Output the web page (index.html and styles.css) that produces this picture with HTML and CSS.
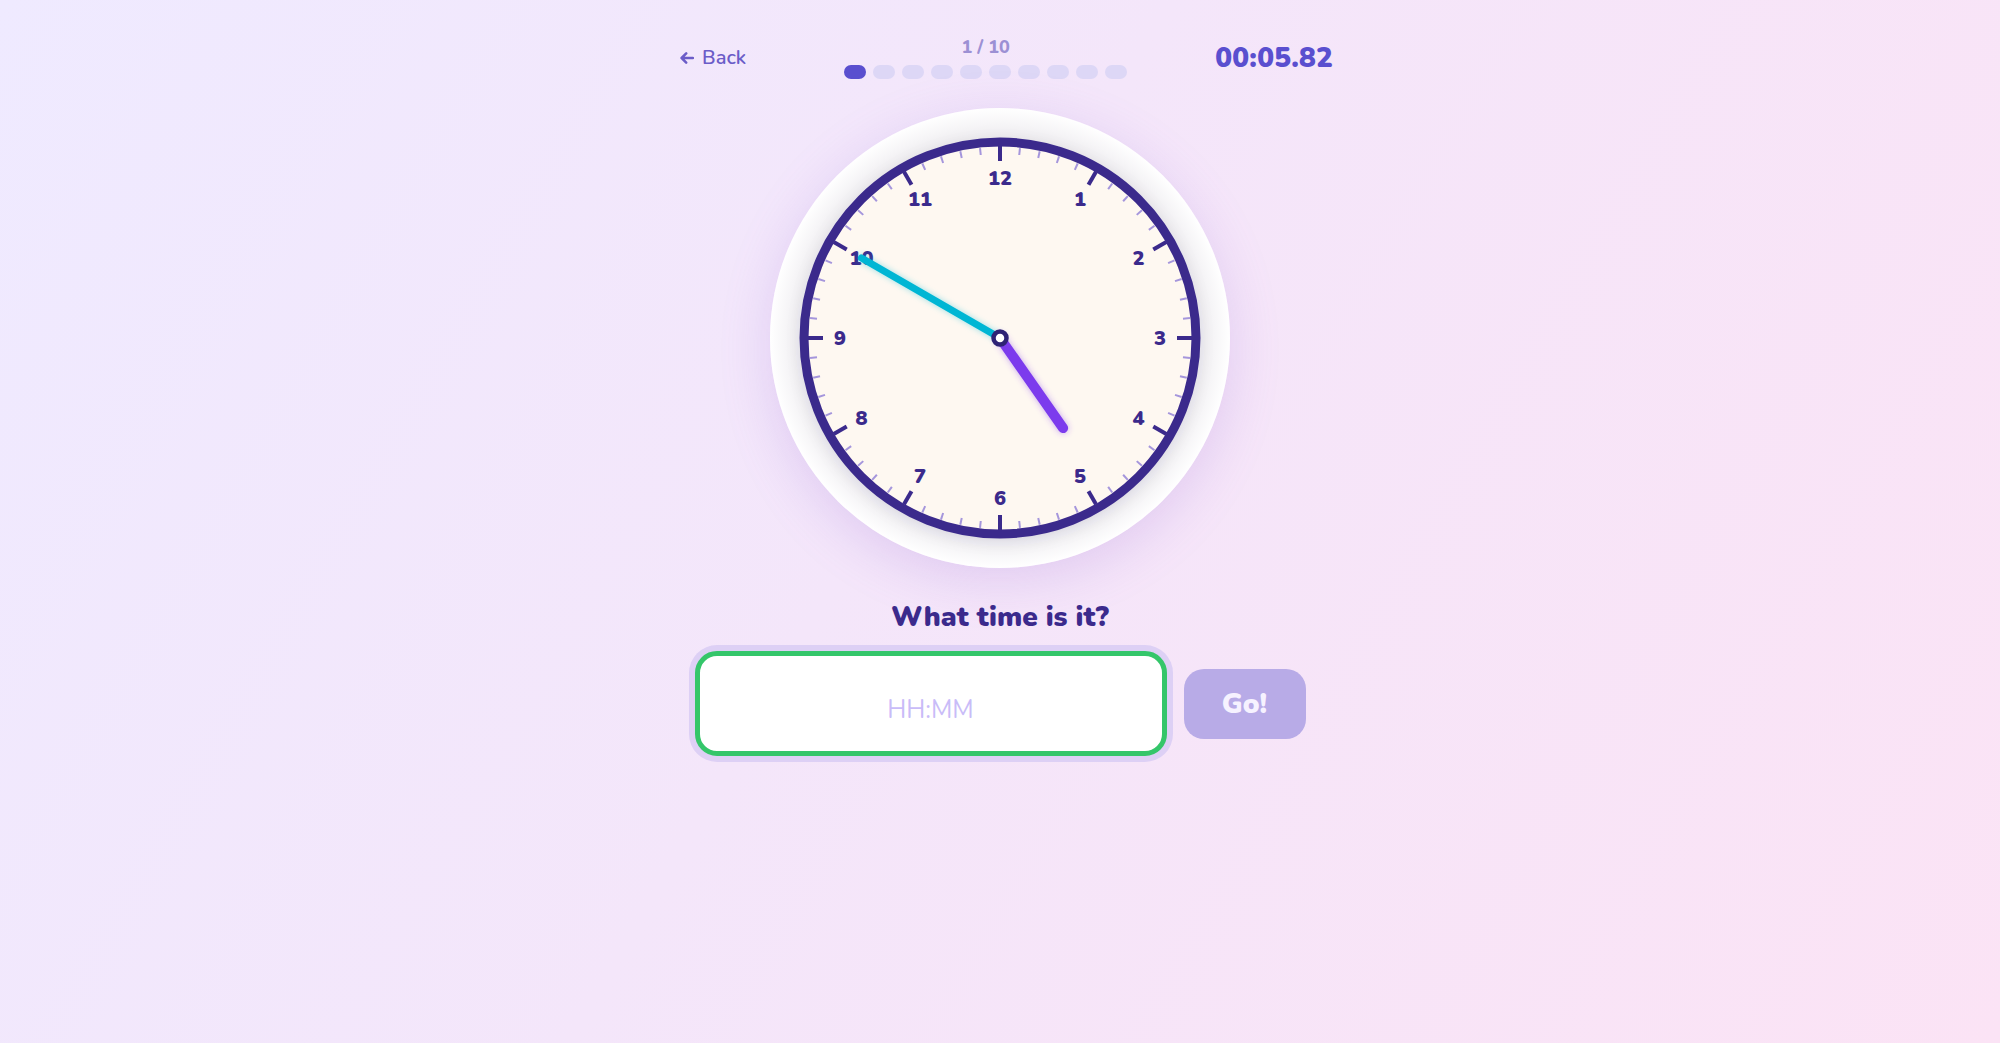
FILE: index.html
```html
<!DOCTYPE html>
<html lang="en">
<head>
<meta charset="utf-8">
<title>What time is it?</title>
<link rel="stylesheet" href="styles.css">
</head>
<body>
<main class="app">
  <header class="topbar">
    <a class="back" href="#"><svg class="back-arrow" width="14" height="12" viewBox="0 0 14 12"><path d="M13 6H1.6M6.2 1.4L1.6 6l4.6 4.6"/></svg>Back</a>
    <div class="progress">
      <div class="progress-label">1 / 10</div>
      <div class="dots">
        <span class="dot active"></span><span class="dot"></span><span class="dot"></span><span class="dot"></span><span class="dot"></span><span class="dot"></span><span class="dot"></span><span class="dot"></span><span class="dot"></span><span class="dot"></span>
      </div>
    </div>
    <div class="timer">00:05.82</div>
  </header>

  <section class="clock-wrap">
    <div class="clock-disc">
      <svg class="clock" width="460" height="460" viewBox="-230 -230 460 460">
        <defs>
          <filter id="faceShadow" x="-30%" y="-30%" width="160%" height="160%">
            <feDropShadow dx="0" dy="4" stdDeviation="9" flood-color="#2a1f55" flood-opacity="0.12"/>
          </filter>
          <filter id="glowCyan" x="-30%" y="-30%" width="160%" height="160%">
            <feDropShadow dx="0" dy="0" stdDeviation="3" flood-color="#06b6d4" flood-opacity="0.4"/>
          </filter>
          <filter id="glowPurple" x="-30%" y="-30%" width="160%" height="160%">
            <feDropShadow dx="0" dy="0" stdDeviation="3" flood-color="#7c3aed" flood-opacity="0.45"/>
          </filter>
        </defs>
        <circle class="face" r="196" filter="url(#faceShadow)"/>
        <g class="minor">
          <line y1="-191" y2="-184" transform="rotate(6)"/><line y1="-191" y2="-184" transform="rotate(12)"/><line y1="-191" y2="-184" transform="rotate(18)"/><line y1="-191" y2="-184" transform="rotate(24)"/>
          <line y1="-191" y2="-184" transform="rotate(36)"/><line y1="-191" y2="-184" transform="rotate(42)"/><line y1="-191" y2="-184" transform="rotate(48)"/><line y1="-191" y2="-184" transform="rotate(54)"/>
          <line y1="-191" y2="-184" transform="rotate(66)"/><line y1="-191" y2="-184" transform="rotate(72)"/><line y1="-191" y2="-184" transform="rotate(78)"/><line y1="-191" y2="-184" transform="rotate(84)"/>
          <line y1="-191" y2="-184" transform="rotate(96)"/><line y1="-191" y2="-184" transform="rotate(102)"/><line y1="-191" y2="-184" transform="rotate(108)"/><line y1="-191" y2="-184" transform="rotate(114)"/>
          <line y1="-191" y2="-184" transform="rotate(126)"/><line y1="-191" y2="-184" transform="rotate(132)"/><line y1="-191" y2="-184" transform="rotate(138)"/><line y1="-191" y2="-184" transform="rotate(144)"/>
          <line y1="-191" y2="-184" transform="rotate(156)"/><line y1="-191" y2="-184" transform="rotate(162)"/><line y1="-191" y2="-184" transform="rotate(168)"/><line y1="-191" y2="-184" transform="rotate(174)"/>
          <line y1="-191" y2="-184" transform="rotate(186)"/><line y1="-191" y2="-184" transform="rotate(192)"/><line y1="-191" y2="-184" transform="rotate(198)"/><line y1="-191" y2="-184" transform="rotate(204)"/>
          <line y1="-191" y2="-184" transform="rotate(216)"/><line y1="-191" y2="-184" transform="rotate(222)"/><line y1="-191" y2="-184" transform="rotate(228)"/><line y1="-191" y2="-184" transform="rotate(234)"/>
          <line y1="-191" y2="-184" transform="rotate(246)"/><line y1="-191" y2="-184" transform="rotate(252)"/><line y1="-191" y2="-184" transform="rotate(258)"/><line y1="-191" y2="-184" transform="rotate(264)"/>
          <line y1="-191" y2="-184" transform="rotate(276)"/><line y1="-191" y2="-184" transform="rotate(282)"/><line y1="-191" y2="-184" transform="rotate(288)"/><line y1="-191" y2="-184" transform="rotate(294)"/>
          <line y1="-191" y2="-184" transform="rotate(306)"/><line y1="-191" y2="-184" transform="rotate(312)"/><line y1="-191" y2="-184" transform="rotate(318)"/><line y1="-191" y2="-184" transform="rotate(324)"/>
          <line y1="-191" y2="-184" transform="rotate(336)"/><line y1="-191" y2="-184" transform="rotate(342)"/><line y1="-191" y2="-184" transform="rotate(348)"/><line y1="-191" y2="-184" transform="rotate(354)"/>
        </g>
        <g class="major">
          <line y1="-192" y2="-177"/><line y1="-192" y2="-177" transform="rotate(30)"/><line y1="-192" y2="-177" transform="rotate(60)"/><line y1="-192" y2="-177" transform="rotate(90)"/>
          <line y1="-192" y2="-177" transform="rotate(120)"/><line y1="-192" y2="-177" transform="rotate(150)"/><line y1="-192" y2="-177" transform="rotate(180)"/><line y1="-192" y2="-177" transform="rotate(210)"/>
          <line y1="-192" y2="-177" transform="rotate(240)"/><line y1="-192" y2="-177" transform="rotate(270)"/><line y1="-192" y2="-177" transform="rotate(300)"/><line y1="-192" y2="-177" transform="rotate(330)"/>
        </g>
        <circle class="rim" r="196"/>
        <g class="numbers">
          <text x="0" y="-160">12</text>
          <text x="80" y="-138.6">1</text>
          <text x="138.6" y="-80">2</text>
          <text x="160" y="0">3</text>
          <text x="138.6" y="80">4</text>
          <text x="80" y="138.6">5</text>
          <text x="0" y="160">6</text>
          <text x="-80" y="138.6">7</text>
          <text x="-138.6" y="80">8</text>
          <text x="-160" y="0">9</text>
          <text x="-138.6" y="-80">10</text>
          <text x="-80" y="-138.6">11</text>
        </g>
        <line class="hand-hour" x1="0" y1="0" x2="63.1" y2="90.1" filter="url(#glowPurple)"/>
        <line class="hand-minute" x1="0" y1="0" x2="-138.6" y2="-80" filter="url(#glowCyan)"/>
        <circle class="pivot" r="6.5"/>
      </svg>
    </div>
  </section>

  <h1 class="question">What time is it?</h1>

  <form class="answer" onsubmit="return false">
    <input class="answer-input" type="text" placeholder="HH:MM">
    <button class="go" type="submit">Go!</button>
  </form>
</main>
</body>
</html>
```

FILE: styles.css
```css
* { box-sizing: border-box; }

html, body {
  margin: 0;
  min-height: 100%;
}

body {
  min-height: 100vh;
  font-family: "Nunito", "Lato", "Noto Sans", sans-serif;
  background: linear-gradient(120deg, #efeaff 0%, #f4e6fa 45%, #fbe3f5 100%);
  color: #3b2a8c;
}

.app {
  width: 680px;
  margin: 0 auto;
  padding-top: 36px;
  display: flex;
  flex-direction: column;
  align-items: center;
}

.topbar {
  width: 100%;
  padding: 0 7px 0 20px;
  display: flex;
  align-items: center;
  justify-content: space-between;
}

.back {
  color: #6b5cc8;
  text-decoration: none;
  font-size: 20px;
  font-weight: 600;
  display: flex;
  align-items: center;
  gap: 8px;
}

.back-arrow {
  display: block;
  fill: none;
  stroke: #6b5cc8;
  stroke-width: 2.5;
  stroke-linecap: round;
  stroke-linejoin: round;
}

.progress {
  display: flex;
  flex-direction: column;
  align-items: center;
  gap: 7px;
  margin-left: 10px;
}

.progress-label {
  font-size: 18px;
  line-height: 22px;
  font-weight: 800;
  color: #9c90d4;
}

.dots {
  display: flex;
  gap: 7px;
}

.dot {
  width: 22px;
  height: 14px;
  border-radius: 7px;
  background: #ddd7f6;
}

.dot.active {
  background: #5a4fcf;
}

.timer {
  font-size: 28px;
  font-weight: 900;
  color: #5a4fcf;
  letter-spacing: 0.2px;
}

.clock-wrap {
  margin-top: 29px;
}

.clock-disc {
  width: 460px;
  height: 460px;
  border-radius: 50%;
  background: radial-gradient(circle closest-side, #ebe9ed 0%, #ebe9ed 86%, #f6f5f7 93%, #ffffff 100%);
  box-shadow: 0 12px 50px rgba(150, 105, 215, 0.22);
}

.clock {
  display: block;
}

.face {
  fill: #fef8f1;
}

.rim {
  fill: none;
  stroke: #3b2a8c;
  stroke-width: 9;
}

.minor line {
  stroke: #a596dc;
  stroke-width: 2;
}

.major line {
  stroke: #3b2a8c;
  stroke-width: 4;
}

.numbers text {
  fill: #3b2a8c;
  font-family: "Nunito", "Lato", "Noto Sans", sans-serif;
  font-size: 20px;
  font-weight: 900;
  text-anchor: middle;
  dominant-baseline: central;
}

.hand-minute {
  stroke: #06b6d4;
  stroke-width: 7;
  stroke-linecap: round;
}

.hand-hour {
  stroke: #7c3aed;
  stroke-width: 10;
  stroke-linecap: round;
}

.pivot {
  fill: #ffffff;
  stroke: #2e2275;
  stroke-width: 4.5;
}

.question {
  margin: 32px 0 0;
  font-size: 28px;
  line-height: 34px;
  font-weight: 900;
  color: #3b2a8c;
}

.answer {
  margin-top: 17px;
  display: flex;
  align-items: center;
  gap: 17px;
}

.answer-input {
  width: 472px;
  height: 105px;
  border: 5px solid #34c66a;
  border-radius: 22px;
  box-shadow: 0 0 0 6px #ddd0f5;
  background: #ffffff;
  outline: none;
  text-align: center;
  font-family: "Nunito", "Lato", "Noto Sans", sans-serif;
  font-size: 25px;
  color: #3b2a8c;
  padding: 12px 0 0;
}

.answer-input::placeholder {
  color: #c9bcf8;
}

.go {
  width: 122px;
  height: 70px;
  border: none;
  border-radius: 20px;
  background: #b8abe7;
  color: #f6f2ff;
  font-family: "Nunito", "Lato", "Noto Sans", sans-serif;
  font-size: 28px;
  font-weight: 900;
  cursor: pointer;
}
```
